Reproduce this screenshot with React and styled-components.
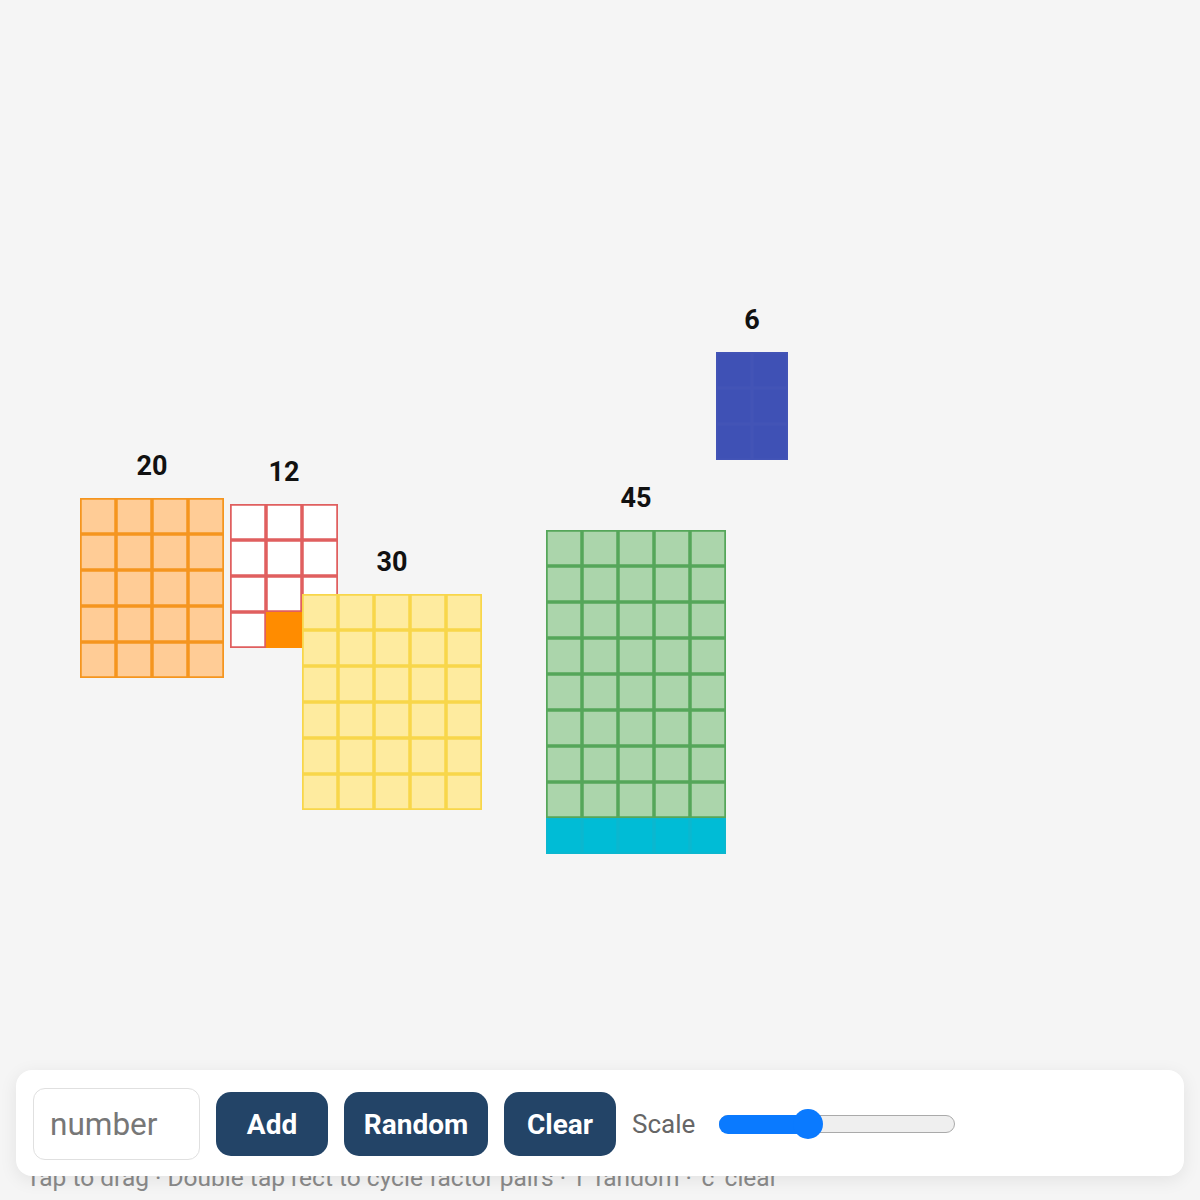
import React from 'react'
import styled, { createGlobalStyle } from 'styled-components'

const GlobalStyle = createGlobalStyle`
  html, body {
    margin: 0;
    padding: 0;
    background: #f5f5f5;
    font-family: Roboto, "Liberation Sans", sans-serif;
  }
  * { box-sizing: border-box; }
`

const CELL = 36

const blocks = [
  { n: 20, x: 80, y: 498, cols: 4, rows: 5, fill: '#ffcc96', line: '#f5951f' },
  { n: 12, x: 230, y: 504, cols: 3, rows: 4, fill: '#ffffff', line: '#e05f5f', special: { 10: ['#ff8c00', '#ff8c00'] } },
  { n: 30, x: 302, y: 594, cols: 5, rows: 6, fill: '#feeb9f', line: '#f8d64a' },
  { n: 45, x: 546, y: 530, cols: 5, rows: 9, fill: '#abd5ab', line: '#55a65a', lastRow: ['#00bcd6', '#0bb7cf'] },
  { n: 6, x: 716, y: 352, cols: 2, rows: 3, fill: '#3f51b5', line: '#4354b6' },
]

export default function App() {
  return (
    <>
      <GlobalStyle />
      <Page>
        <Stage>
          {blocks.map(b => (
            <Block key={b.n} style={{ left: b.x, top: b.y }}>
              <Label>{b.n}</Label>
              <Grid $cols={b.cols} $rows={b.rows}>
                {Array.from({ length: b.cols * b.rows }).map((_, i) => {
                  let fill = b.fill
                  let line = b.line
                  if (b.special && b.special[i]) [fill, line] = b.special[i]
                  if (b.lastRow && i >= b.cols * (b.rows - 1)) [fill, line] = b.lastRow
                  return <Cell key={i} $fill={fill} $line={line} />
                })}
              </Grid>
            </Block>
          ))}
        </Stage>
        <Hint>Tap to drag · Double tap rect to cycle factor pairs · 'r' random · 'c' clear</Hint>
        <Toolbar>
          <NumberInput placeholder="number" />
          <Button $w={112}>Add</Button>
          <Button $w={144}>Random</Button>
          <Button $w={112}>Clear</Button>
          <ScaleLabel>Scale</ScaleLabel>
          <Slider>
            <SliderFill style={{ width: 88 }} />
            <Thumb style={{ left: 88 }} />
          </Slider>
        </Toolbar>
      </Page>
    </>
  )
}

const Page = styled.div`
  position: relative;
  height: 100vh;
  display: flex;
  flex-direction: column;
  overflow: hidden;
`

const Stage = styled.div`
  position: relative;
  flex: 1;
`

const Block = styled.div`
  position: absolute;
`

const Label = styled.div`
  position: absolute;
  left: 0;
  right: 0;
  top: -49px;
  text-align: center;
  font-size: 27px;
  font-weight: 700;
  color: #111;
  line-height: 34px;
`

const Grid = styled.div`
  display: grid;
  grid-template-columns: repeat(${p => p.$cols}, ${CELL}px);
  grid-template-rows: repeat(${p => p.$rows}, ${CELL}px);
`

const Cell = styled.div`
  background: ${p => p.$fill};
  box-shadow: inset 0 0 0 1.75px ${p => p.$line};
`

const Hint = styled.div`
  padding: 0 0 8px 26px;
  font-size: 24.5px;
  line-height: 28px;
  color: #8a8a8a;
  white-space: nowrap;
`

const Toolbar = styled.div`
  position: absolute;
  left: 16px;
  right: 16px;
  bottom: 24px;
  height: 106px;
  background: #fff;
  border-radius: 16px;
  box-shadow: 0 4px 18px rgba(0, 0, 0, 0.08);
  display: flex;
  align-items: center;
  padding: 2px 17px 0 17px;
  gap: 16px;
`

const NumberInput = styled.input`
  width: 167px;
  height: 72px;
  border: 1.5px solid #e0e0e0;
  border-radius: 12px;
  padding: 0 16px;
  font-family: Roboto, "Liberation Sans", sans-serif;
  font-size: 31.5px;
  color: #333;
  outline: none;
  &::placeholder { color: #777; }
`

const Button = styled.button`
  width: ${p => p.$w}px;
  height: 64px;
  border: none;
  border-radius: 15px;
  background: #234467;
  color: #fff;
  font-family: Roboto, "Liberation Sans", sans-serif;
  font-size: 28px;
  font-weight: 700;
  cursor: pointer;
`

const ScaleLabel = styled.span`
  font-size: 26px;
  color: #666;
  margin-right: 8px;
`

const Slider = styled.div`
  position: relative;
  width: 236px;
  height: 18px;
  border-radius: 9px;
  background: #efefef;
  border: 1.5px solid #aaa;
`

const SliderFill = styled.div`
  position: absolute;
  left: -1.5px;
  top: -1.5px;
  bottom: -1.5px;
  background: #0a7aff;
  border-radius: 9px;
`

const Thumb = styled.div`
  position: absolute;
  top: 50%;
  width: 30px;
  height: 30px;
  margin: -15px 0 0 -15px;
  border-radius: 50%;
  background: #0a7aff;
`
